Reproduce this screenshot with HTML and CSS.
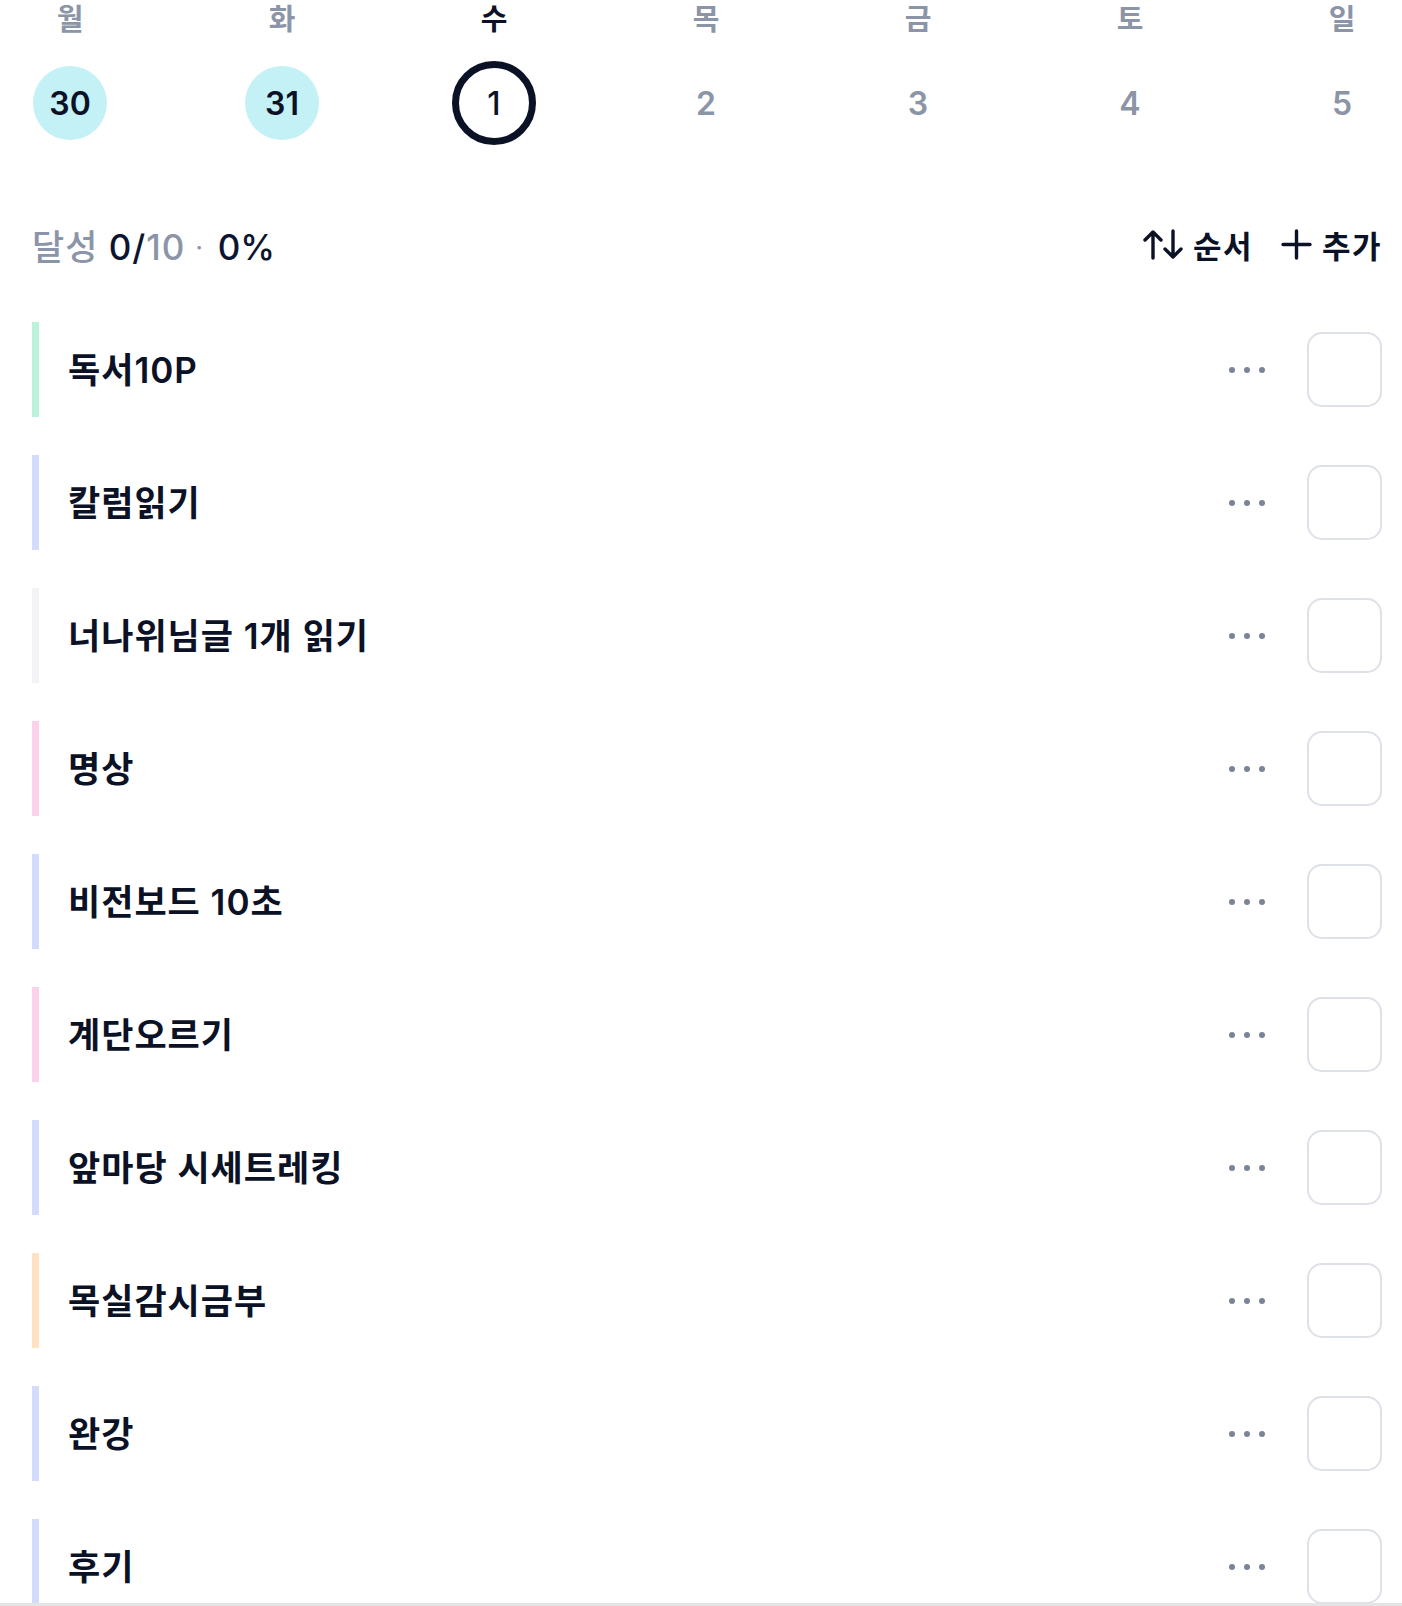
FILE: index.html
```html
<!DOCTYPE html>
<html lang="ko">
  <head>
    <meta charset="utf-8">
    <title>루틴</title>
    <link rel="stylesheet" href="styles.css">
  </head>
  <body>
    <div class="page">
      <div class="week">
        <div class="day"><span class="dayName">월</span><span class="date done">30</span></div>
        <div class="day"><span class="dayName">화</span><span class="date done">31</span></div>
        <div class="day"><span class="dayName current">수</span><span class="date today">1</span></div>
        <div class="day"><span class="dayName">목</span><span class="date">2</span></div>
        <div class="day"><span class="dayName">금</span><span class="date">3</span></div>
        <div class="day"><span class="dayName">토</span><span class="date">4</span></div>
        <div class="day"><span class="dayName">일</span><span class="date">5</span></div>
      </div>

      <div class="summary">
        <div class="stats">
          <span class="muted">달성</span> <span class="strong">0/</span><span class="muted">10</span><span class="muted dot">·</span><span class="strong pct">0%</span>
        </div>
        <div class="actions">
          <button class="action">
            <svg width="40" height="31" viewBox="0 0 40 31" fill="none" stroke="#0b1225" stroke-width="3.4" stroke-linecap="round" stroke-linejoin="round">
              <path d="M10 29V3M2 11l8-8 8 8"/>
              <path d="M30 2v26M22 20l8 8 8-8"/>
            </svg>
            순서
          </button>
          <button class="action">
            <svg width="31" height="31" viewBox="0 0 31 31" fill="none" stroke="#0b1225" stroke-width="3.4" stroke-linecap="round">
              <path d="M15.5 2v27M2 15.5h27"/>
            </svg>
            추가
          </button>
        </div>
      </div>

      <ul class="habits">
        <li class="habit mint"><span class="title">독서10P</span><button class="more"><i></i><i></i><i></i></button><span class="check"></span></li>
        <li class="habit blue"><span class="title">칼럼읽기</span><button class="more"><i></i><i></i><i></i></button><span class="check"></span></li>
        <li class="habit gray"><span class="title">너나위님글 1개 읽기</span><button class="more"><i></i><i></i><i></i></button><span class="check"></span></li>
        <li class="habit pink"><span class="title">명상</span><button class="more"><i></i><i></i><i></i></button><span class="check"></span></li>
        <li class="habit blue"><span class="title">비전보드 10초</span><button class="more"><i></i><i></i><i></i></button><span class="check"></span></li>
        <li class="habit pink"><span class="title">계단오르기</span><button class="more"><i></i><i></i><i></i></button><span class="check"></span></li>
        <li class="habit blue"><span class="title">앞마당 시세트레킹</span><button class="more"><i></i><i></i><i></i></button><span class="check"></span></li>
        <li class="habit peach"><span class="title">목실감시금부</span><button class="more"><i></i><i></i><i></i></button><span class="check"></span></li>
        <li class="habit blue"><span class="title">완강</span><button class="more"><i></i><i></i><i></i></button><span class="check"></span></li>
        <li class="habit blue"><span class="title">후기</span><button class="more"><i></i><i></i><i></i></button><span class="check"></span></li>
      </ul>
    </div>
    <div class="bottomEdge"></div>
  </body>
</html>
```

FILE: styles.css
```css
body { margin: 0; background: #fff; color: #0b1225; font-family: Inter, "Noto Sans CJK KR", sans-serif; }

.page { padding: 0 20px 0 32px; }

/* week strip */
.week { display: flex; justify-content: space-between; margin-left: -4px; margin-right: -2px; }
.day { display: flex; flex-direction: column; align-items: center; width: 84px; }
.dayName { font-size: 29px; line-height: 40px; font-weight: 600; color: #8b95a7; }
.dayName.current { color: #0b1225; }
.date { margin-top: 21px; width: 84px; height: 84px; box-sizing: border-box; border: 5px solid transparent; border-radius: 50%; background-clip: padding-box; display: flex; align-items: center; justify-content: center; font-size: 32px; font-weight: 600; color: #8b95a7; }
.date.done { background-color: #c3f1f6; color: #0b1225; }
.date.today { border: 7px solid #0b1225; color: #0b1225; font-weight: 500; }

/* summary row */
.summary { display: flex; justify-content: space-between; align-items: center; margin-top: 74px; height: 50px; }
.stats { font-size: 35px; font-weight: 500; letter-spacing: 1px; }
.muted { color: #8b95a7; }
.strong { color: #0b1530; }
.dot { font-size: 24px; vertical-align: 4px; margin: 0 14px 0 10px; }
.pct { letter-spacing: 0; }
.actions { display: flex; gap: 28px; align-items: center; }
.action { display: flex; align-items: center; gap: 10px; background: none; border: none; padding: 0; font-family: inherit; font-size: 31px; font-weight: 600; letter-spacing: 1.5px; color: #0b1225; }

/* habit list */
.habits { list-style: none; margin: 53px 0 0; padding: 0; display: flex; flex-direction: column; gap: 38px; }
.habit { display: flex; align-items: center; height: 95px; border-left: 7px solid #d3dcfa; padding-left: 29px; }
.habit.mint { border-color: #bdf2da; }
.habit.blue { border-color: #d3dcfa; }
.habit.gray { border-color: #f2f3f5; }
.habit.pink { border-color: #fbd1ec; }
.habit.peach { border-color: #fee2c2; }
.title { flex: 1; font-size: 35px; font-weight: 600; letter-spacing: 1px; padding-bottom: 4px; }
.more { display: flex; gap: 9px; align-items: center; justify-content: center; width: 44px; height: 44px; background: none; border: none; padding: 0; margin-right: 38px; }
.more i { width: 6px; height: 6px; border-radius: 50%; background: #7b8496; }
.check { width: 75px; height: 75px; box-sizing: border-box; border: 2px solid #dfe1e8; border-radius: 15px; }

.bottomEdge { position: fixed; left: 0; right: 0; bottom: 0; height: 3px; background: #e4e4e6; }
```
